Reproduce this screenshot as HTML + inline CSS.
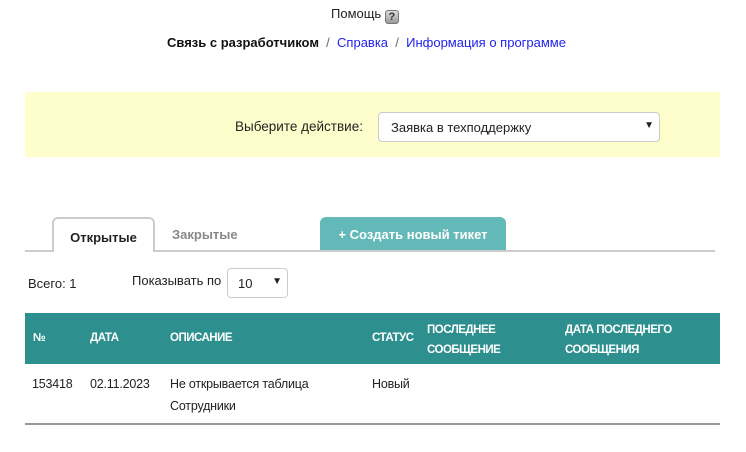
<!DOCTYPE html>
<html><head><meta charset="utf-8"><style>
*{margin:0;padding:0;box-sizing:border-box}
body{width:746px;height:452px;background:#fff;font-family:"Liberation Sans","DejaVu Sans",sans-serif;color:#222;position:relative;overflow:hidden;font-size:13px}
.a{position:absolute;white-space:nowrap}
.th{position:absolute;color:#fff;font-weight:bold;font-size:11.5px;letter-spacing:-0.5px;line-height:20px}
.td{position:absolute;font-size:12.5px;line-height:22px;letter-spacing:-0.2px}
</style></head><body>
<div class="a" style="left:331px;top:6px;font-size:13px">Помощь <span style="display:inline-block;width:14px;height:14px;border:1px solid #777;border-radius:3px;background:linear-gradient(#ddd,#999);color:#333;font-size:11px;font-weight:bold;text-align:center;line-height:12px;vertical-align:-2px">?</span></div>
<div class="a" style="left:167px;top:35px;font-size:13px"><b style="color:#111">Связь с разработчиком</b> <span style="color:#666">&nbsp;/&nbsp;</span> <span style="color:#2222ee">Справка</span> <span style="color:#666">&nbsp;/&nbsp;</span> <span style="color:#2222ee">Информация о программе</span></div>
<div class="a" style="left:25px;top:92px;width:695px;height:65px;background:#fefecc"></div>
<div class="a" style="left:235px;top:119px;font-size:13.5px">Выберите действие:</div>
<div class="a" style="left:378px;top:112px;width:282px;height:30px;background:#fff;border:1px solid #ccc;border-radius:4px;font-size:13px;padding:7px 0 0 12px">Заявка в техподдержку<span style="position:absolute;right:5px;top:7px;font-size:10px">▼</span></div>
<div class="a" style="left:25px;top:250px;width:690px;height:2px;background:#ccc"></div>
<div class="a" style="left:52px;top:217px;width:103px;height:35px;border:2px solid #ccc;border-bottom:none;border-radius:6px 6px 0 0;background:#fff;font-weight:bold;font-size:13px;text-align:center;padding-top:11px">Открытые</div>
<div class="a" style="left:172px;top:227px;font-weight:bold;font-size:13px;color:#888">Закрытые</div>
<div class="a" style="left:320px;top:217px;width:186px;height:33px;background:#62b9b8;border-radius:6px 6px 0 0;color:#fff;font-weight:bold;font-size:13px;text-align:center;padding-top:10px">+ Создать новый тикет</div>
<div class="a" style="left:28px;top:276px;font-size:13px">Всего: 1</div>
<div class="a" style="left:132px;top:273px;font-size:13px">Показывать по</div>
<div class="a" style="left:227px;top:268px;width:61px;height:30px;border:1px solid #ccc;border-radius:4px;font-size:13px;padding:7px 0 0 10px">10<span style="position:absolute;right:5px;top:7px;font-size:10px">▼</span></div>
<div class="a" style="left:25px;top:313px;width:695px;height:51px;background:#2e8f8f"></div>
<div class="th" style="left:33px;top:328px">№</div>
<div class="th" style="left:90px;top:328px">ДАТА</div>
<div class="th" style="left:170px;top:328px">ОПИСАНИЕ</div>
<div class="th" style="left:372px;top:328px">СТАТУС</div>
<div class="th" style="left:427px;top:320px">ПОСЛЕДНЕЕ<br>СООБЩЕНИЕ</div>
<div class="th" style="left:565px;top:320px">ДАТА ПОСЛЕДНЕГО<br>СООБЩЕНИЯ</div>
<div class="td" style="left:32px;top:373px">153418</div>
<div class="td" style="left:90px;top:373px">02.11.2023</div>
<div class="td" style="left:170px;top:373px">Не открывается таблица<br>Сотрудники</div>
<div class="td" style="left:372px;top:373px">Новый</div>
<div class="a" style="left:25px;top:423px;width:695px;height:2px;background:#999"></div>
</body></html>
